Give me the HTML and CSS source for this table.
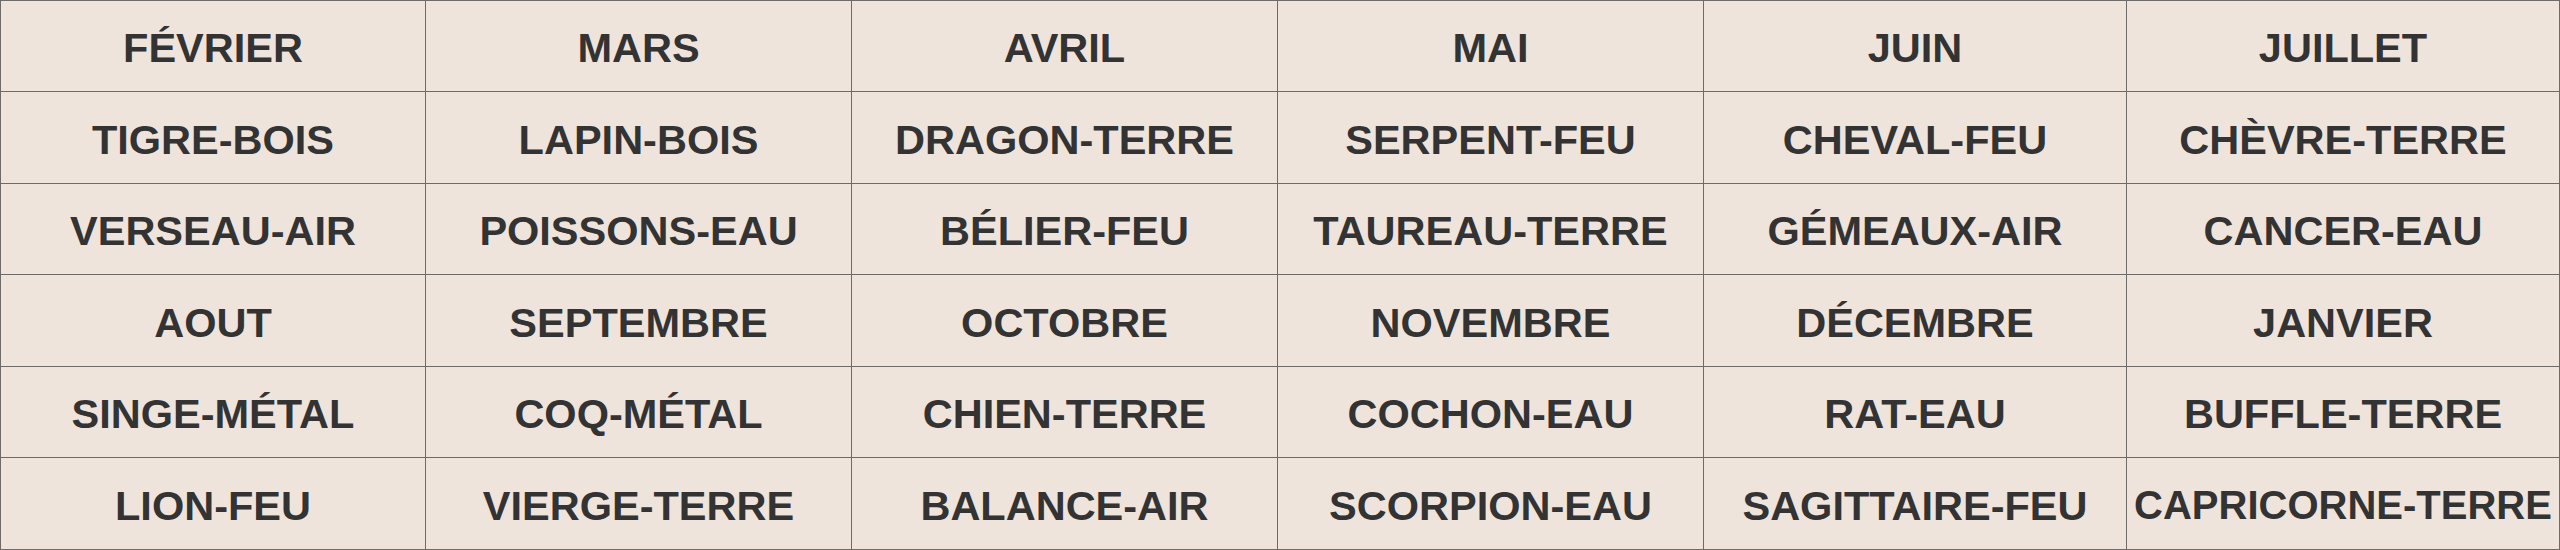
FILE: index.html
```html
<!DOCTYPE html>
<html lang="fr">
<head>
<meta charset="utf-8">
<title>Calendrier</title>
<link rel="stylesheet" href="styles.css">
</head>
<body>
<div class="grid">
  <div class="cell">FÉVRIER</div>
  <div class="cell">MARS</div>
  <div class="cell">AVRIL</div>
  <div class="cell">MAI</div>
  <div class="cell">JUIN</div>
  <div class="cell">JUILLET</div>

  <div class="cell">TIGRE-BOIS</div>
  <div class="cell">LAPIN-BOIS</div>
  <div class="cell">DRAGON-TERRE</div>
  <div class="cell">SERPENT-FEU</div>
  <div class="cell">CHEVAL-FEU</div>
  <div class="cell">CHÈVRE-TERRE</div>

  <div class="cell">VERSEAU-AIR</div>
  <div class="cell">POISSONS-EAU</div>
  <div class="cell">BÉLIER-FEU</div>
  <div class="cell">TAUREAU-TERRE</div>
  <div class="cell">GÉMEAUX-AIR</div>
  <div class="cell">CANCER-EAU</div>

  <div class="cell">AOUT</div>
  <div class="cell">SEPTEMBRE</div>
  <div class="cell">OCTOBRE</div>
  <div class="cell">NOVEMBRE</div>
  <div class="cell">DÉCEMBRE</div>
  <div class="cell">JANVIER</div>

  <div class="cell">SINGE-MÉTAL</div>
  <div class="cell">COQ-MÉTAL</div>
  <div class="cell">CHIEN-TERRE</div>
  <div class="cell">COCHON-EAU</div>
  <div class="cell">RAT-EAU</div>
  <div class="cell">BUFFLE-TERRE</div>

  <div class="cell">LION-FEU</div>
  <div class="cell">VIERGE-TERRE</div>
  <div class="cell">BALANCE-AIR</div>
  <div class="cell">SCORPION-EAU</div>
  <div class="cell">SAGITTAIRE-FEU</div>
  <div class="cell cell-tight">CAPRICORNE-TERRE</div>
</div>
</body>
</html>
```

FILE: styles.css
```css
html, body {
  margin: 0;
  padding: 0;
  background: #ffffff;
}

.grid {
  display: grid;
  grid-template-columns: 425px 426px 426px 426px 423px 433px;
  grid-template-rows: 91px 92px 91px 92px 91px 92px;
  width: 2560px;
  box-sizing: border-box;
  border-top: 1px solid #6e6a68;
  border-left: 1px solid #6e6a68;
  background: #efe4dc;
}

.cell {
  box-sizing: border-box;
  border-right: 1px solid #6e6a68;
  border-bottom: 1px solid #6e6a68;
  display: flex;
  align-items: center;
  justify-content: center;
  padding-top: 4px;
  font-family: "Liberation Sans", Arial, sans-serif;
  font-weight: bold;
  font-size: 41.5px;
  color: #333333;
  white-space: nowrap;
  overflow: hidden;
}

.cell-tight {
  font-size: 40px;
}
```
